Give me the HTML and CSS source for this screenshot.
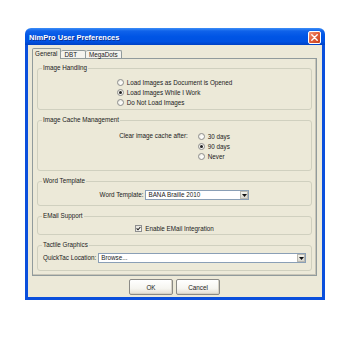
FILE: index.html
```html
<!DOCTYPE html>
<html>
<head>
<meta charset="utf-8">
<title>NimPro User Preferences</title>
<link rel="stylesheet" href="styles.css">
</head>
<body>
<div class="window">
  <div class="titlebar">
    <span class="title">NimPro User Preferences</span>
    <span class="close">
      <svg width="7" height="7" viewBox="0 0 7 7"><path d="M0.8 0.8 L6.2 6.2 M6.2 0.8 L0.8 6.2" stroke="#fff" stroke-width="1.4" stroke-linecap="round"/></svg>
    </span>
  </div>
  <div class="body">
    <div class="tabs">
      <div class="tab tab-active">General</div>
      <div class="tab tab-dbt">DBT</div>
      <div class="tab">MegaDots</div>
    </div>
    <div class="panel">
      <fieldset class="group g-handling">
        <legend>Image Handling</legend>
        <div class="center">
          <div class="opts">
            <div class="opt"><span class="radio"></span>Load Images as Document is Opened</div>
            <div class="opt"><span class="radio radio-on"></span>Load Images While I Work</div>
            <div class="opt"><span class="radio"></span>Do Not Load Images</div>
          </div>
        </div>
      </fieldset>
      <fieldset class="group g-cache">
        <legend>Image Cache Management</legend>
        <div class="center cache-row">
          <div class="cache-label">Clear image cache after:</div>
          <div class="opts">
            <div class="opt"><span class="radio"></span>30 days</div>
            <div class="opt"><span class="radio radio-on"></span>90 days</div>
            <div class="opt"><span class="radio"></span>Never</div>
          </div>
        </div>
      </fieldset>
      <fieldset class="group g-word">
        <legend>Word Template</legend>
        <div class="center field-row">
          <div class="field-label">Word Template:</div>
          <div class="combo combo-word">
            <span class="combo-text">BANA Braille 2010</span>
            <span class="combo-btn"><svg width="5" height="3" viewBox="0 0 5 3"><path d="M0 0 H5 L2.5 3 Z" fill="#111"/></svg></span>
          </div>
        </div>
      </fieldset>
      <fieldset class="group g-email">
        <legend>EMail Support</legend>
        <div class="center">
          <div class="opt"><span class="check"><svg width="5" height="5" viewBox="0 0 5 5"><path d="M0.6 2.4 L2 3.8 L4.4 1" fill="none" stroke="#222" stroke-width="1.1"/></svg></span>Enable EMail Integration</div>
        </div>
      </fieldset>
      <fieldset class="group g-tactile">
        <legend>Tactile Graphics</legend>
        <div class="field-row">
          <div class="field-label">QuickTac Location:</div>
          <div class="combo combo-wide">
            <span class="combo-text">Browse...</span>
            <span class="combo-btn"><svg width="5" height="3" viewBox="0 0 5 3"><path d="M0 0 H5 L2.5 3 Z" fill="#111"/></svg></span>
          </div>
        </div>
      </fieldset>
    </div>
    <div class="buttons">
      <button class="btn">OK</button>
      <button class="btn">Cancel</button>
    </div>
  </div>
</div>
</body>
</html>
```
FILE: styles.css
```css
html, body {
  margin: 0;
  padding: 0;
  background: #ffffff;
}

body {
  font-family: "Liberation Sans", Arial, sans-serif;
  font-size: 6.3px;
  color: #1a1a1a;
}

.window {
  width: 300px;
  margin: 28px 0 0 25px;
}

.titlebar {
  height: 17px;
  box-sizing: border-box;
  display: flex;
  align-items: flex-start;
  justify-content: space-between;
  padding: 3px 4px 0 4px;
  border-radius: 6px 6px 0 0;
  background: linear-gradient(#3d8ef8 0%, #0f62ea 18%, #0055e5 50%, #0052e2 80%, #0041c4 100%);
}

.title {
  color: #ffffff;
  font-weight: bold;
  font-size: 7.5px;
  line-height: 13px;
  text-shadow: 1px 1px 0 #0a2f96;
}

.close {
  width: 13px;
  height: 13px;
  box-sizing: border-box;
  border: 1px solid #ffffff;
  border-radius: 2px;
  background: linear-gradient(135deg, #f39a7c 0%, #e2603d 45%, #c6401c 100%);
  display: flex;
  align-items: center;
  justify-content: center;
}

.body {
  background: #ece9d8;
  border: 3px solid #0a4fdc;
  border-top: 0;
  padding: 3px 5px 2px 4px;
}

.tabs {
  display: flex;
  align-items: flex-end;
  height: 10px;
}

.tab {
  height: 8px;
  box-sizing: border-box;
  padding: 0 3px;
  line-height: 8px;
  border: 1px solid #919b9c;
  border-bottom: 0;
  border-left: 0;
  background: #f4f3ee;
  border-radius: 2px 2px 0 0;
  white-space: nowrap;
}

.tab-active {
  height: 11px;
  margin-bottom: -1px;
  border-left: 1px solid #919b9c;
  padding: 1px 3px 0 2px;
  background: #ece9d8;
  position: relative;
  z-index: 1;
}

.tab-dbt {
  padding-right: 8px;
}

.panel {
  border: 1px solid #919b9c;
  box-shadow: inset -1px -1px 0 #c8c5b8;
  background: #ece9d8;
  padding: 5px 4px 4px 4px;
  display: flex;
  flex-direction: column;
  gap: 6px;
}

.group {
  margin: 0;
  min-width: 0;
  border: 1px solid #d0d0bf;
  border-radius: 3px;
  padding: 0 5px;
}

.group legend {
  padding: 0 1px;
  margin-left: -1px;
  line-height: 8px;
  font-size: 6.3px;
}

.g-handling { padding-top: 5px; padding-bottom: 2px; }
.g-cache { padding-top: 7px; padding-bottom: 9px; }
.g-word { padding-top: 5px; padding-bottom: 5px; }
.g-email { padding-top: 3px; padding-bottom: 1px; }
.g-tactile { padding-top: 4px; padding-bottom: 7px; padding-right: 5px; }

.center {
  width: fit-content;
  margin: 0 auto;
}

.opts {
  display: flex;
  flex-direction: column;
}

.opt {
  display: flex;
  align-items: center;
  gap: 3px;
  height: 10px;
  white-space: nowrap;
}

.radio {
  width: 7px;
  height: 7px;
  box-sizing: border-box;
  border: 1px solid #8e8f8f;
  border-radius: 50%;
  background: radial-gradient(circle at 65% 65%, #ffffff 0%, #f2f1ea 60%, #dcdad0 100%);
  display: flex;
  align-items: center;
  justify-content: center;
  flex: none;
}

.radio-on::after {
  content: "";
  width: 3px;
  height: 3px;
  border-radius: 50%;
  background: #222;
}

.check {
  width: 7px;
  height: 7px;
  box-sizing: border-box;
  border: 1px solid #8e8f8f;
  background: linear-gradient(135deg, #e3e1d8, #fbfbf8);
  display: flex;
  align-items: center;
  justify-content: center;
  flex: none;
}

.cache-row {
  display: flex;
  align-items: flex-start;
  gap: 10px;
}

.cache-label {
  line-height: 10px;
  white-space: nowrap;
}

.field-row {
  display: flex;
  align-items: center;
  gap: 2px;
}

.field-label {
  white-space: nowrap;
  line-height: 10px;
}

.combo {
  display: flex;
  align-items: stretch;
  height: 10px;
  box-sizing: border-box;
  border: 1px solid #8a9fb6;
  background: #ffffff;
}

.combo-word {
  width: 104px;
}

.combo-wide {
  flex: 1;
}

.combo-text {
  flex: 1;
  padding-left: 2px;
  line-height: 8px;
  white-space: nowrap;
  overflow: hidden;
}

.combo-btn {
  width: 8px;
  box-sizing: border-box;
  border: 1px solid #b9b8b0;
  background: linear-gradient(#f3f2ec, #dad8cf);
  display: flex;
  align-items: center;
  justify-content: center;
}

.buttons {
  display: flex;
  justify-content: center;
  gap: 3px;
  margin-top: 3px;
}

.btn {
  width: 44px;
  height: 16px;
  box-sizing: border-box;
  margin: 0;
  padding: 0;
  font-family: "Liberation Sans", Arial, sans-serif;
  font-size: 6.3px;
  color: #1a1a1a;
  border: 1px solid #8a8a86;
  border-radius: 2px;
  background: linear-gradient(#ffffff 0%, #f6f5f0 60%, #e2ded3 100%);
  box-shadow: inset -1px -1px 0 #d6d2c6;
}
```
